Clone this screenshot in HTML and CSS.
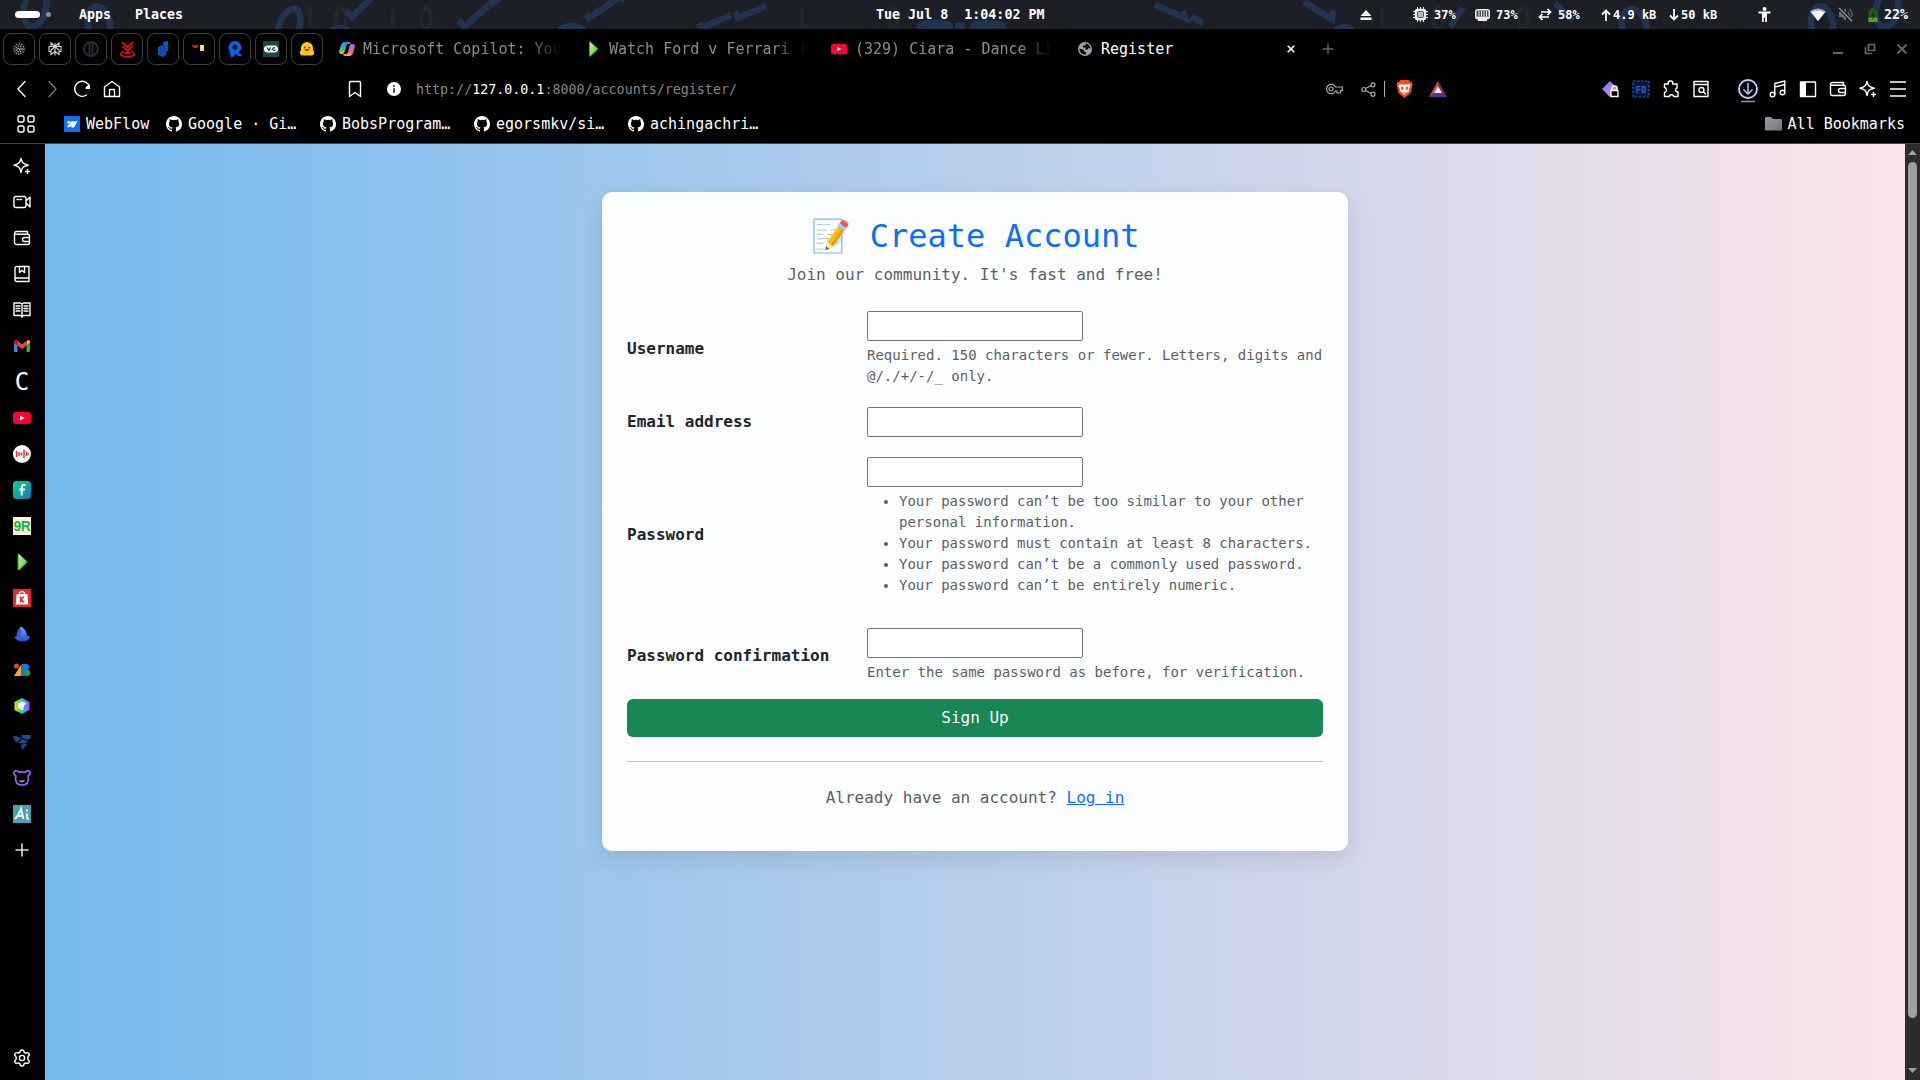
FILE: index.html
```html
<!DOCTYPE html>
<html lang="en">
<head>
<meta charset="utf-8">
<title>Register</title>
<link rel="stylesheet" href="styles.css">
</head>
<body>
<svg width="0" height="0" class="defs">
  <defs>
    <linearGradient id="gPlay" x1="0" y1="0" x2="1" y2="1"><stop offset="0" stop-color="#c8f5b4"/><stop offset="1" stop-color="#4fc433"/></linearGradient>
    <linearGradient id="gCopA" x1="0" y1="0" x2="0" y2="1"><stop offset="0" stop-color="#1b8df0"/><stop offset=".6" stop-color="#3fc29a"/><stop offset="1" stop-color="#f1c21b"/></linearGradient>
    <linearGradient id="gCopB" x1="0" y1="0" x2="0" y2="1"><stop offset="0" stop-color="#9a6cf0"/><stop offset=".6" stop-color="#ef5f8f"/><stop offset="1" stop-color="#f9a35c"/></linearGradient>
    <linearGradient id="gTeal" x1="0" y1="0" x2="1" y2="1"><stop offset="0" stop-color="#06d68f"/><stop offset="1" stop-color="#1377b8"/></linearGradient>
    <linearGradient id="gGem" x1="0" y1="0" x2="1" y2="1"><stop offset="0" stop-color="#4c7df5"/><stop offset=".5" stop-color="#b184f4"/><stop offset="1" stop-color="#f3a0b0"/></linearGradient>
    <linearGradient id="gFin" x1="0" y1="0" x2="0" y2="1"><stop offset="0" stop-color="#78a8ff"/><stop offset="1" stop-color="#1c50d8"/></linearGradient>
    <linearGradient id="gHex" x1="0" y1="0" x2="1" y2="0"><stop offset="0" stop-color="#e8e020"/><stop offset=".3" stop-color="#57e23c"/><stop offset=".6" stop-color="#20b8ec"/><stop offset="1" stop-color="#c538f0"/></linearGradient>
    <linearGradient id="gFolder" x1="0" y1="0" x2="1" y2="1"><stop offset="0" stop-color="#9a9aa2"/><stop offset="1" stop-color="#74747c"/></linearGradient>
    <symbol id="github" viewBox="0 0 16 16"><path fill="#fff" d="M8 0C3.58 0 0 3.58 0 8c0 3.54 2.29 6.53 5.47 7.59.4.07.55-.17.55-.38v-1.49c-2.01.37-2.53-.49-2.69-.94-.09-.23-.48-.94-.82-1.13-.28-.15-.68-.52-.01-.53.63-.01 1.08.58 1.23.82.72 1.21 1.87.87 2.33.66.07-.52.28-.87.51-1.07-1.78-.2-3.64-.89-3.64-3.95 0-.87.31-1.59.82-2.15-.08-.2-.36-1.02.08-2.12 0 0 .67-.21 2.2.82a7.6 7.6 0 0 1 4 0c1.53-1.04 2.2-.82 2.2-.82.44 1.1.16 1.92.08 2.12.51.56.82 1.27.82 2.15 0 3.07-1.87 3.75-3.65 3.95.29.25.54.73.54 1.48v2.2c0 .21.15.46.55.38A8 8 0 0 0 8 0z"/></symbol>
    <symbol id="sparkle" viewBox="0 0 18 18"><path class="ln" d="M8 1.500C9 5.800 10.200 7.200 15.300 8.200 10.200 9.200 9 10.500 8 15.500 7 10.500 5.800 9.200 .9 8.200 5.800 7.200 7 5.800 8 1.500zM14.500 12.500v4M12.500 14.500h4"/></symbol>
    <symbol id="wallet" viewBox="0 0 18 18"><path class="ln" d="M1.500 4.500a2 2 0 0 1 2-2h11v2.500M1.500 4.500c0 .5.500.8 1 .8h12a2 2 0 0 1 2 2v6.200a2 2 0 0 1-2 2h-11a2 2 0 0 1-2-2zM16.500 8.500h-5a2 2 0 0 0 0 4h5"/></symbol>
    <symbol id="play" viewBox="0 0 18 18"><path fill="url(#gPlay)" stroke="#32a51d" d="M5 1.500q0-1 1.200-.3l7.500 7q.9.800 0 1.600l-7.500 7q-1.200.7-1.200-.3z"/></symbol>
    <symbol id="yt" viewBox="0 0 18 18"><rect y="3" width="18" height="12" rx="3" fill="#ff0033"/><path fill="#fff" d="M7 6.500v5l4.500-2.500z"/></symbol>
  </defs>
</svg>

<header class="topbar">
  <svg class="pattern" width="1920" height="29" viewBox="0 0 1920 29">
    <g class="faint"><path d="M307 9h3v19M393 9v19M802 8v18h5M1382 9v18M1485 9v18"/><ellipse cx="341" cy="18" rx="5" ry="10"/><ellipse cx="426" cy="18" rx="5" ry="10"/><ellipse cx="893" cy="18" rx="5" ry="10"/><ellipse cx="1438" cy="18" rx="5" ry="10"/><ellipse cx="1523" cy="18" rx="5" ry="10"/></g>
    <g class="digits"><ellipse cx="35" cy="8" rx="11" ry="19" transform="rotate(12 35 8)"/><ellipse cx="99" cy="25" rx="11" ry="19" transform="rotate(-10 99 25)"/><ellipse cx="289" cy="27" rx="10" ry="19" transform="rotate(20 289 27)"/><ellipse cx="340" cy="38" rx="11" ry="10"/><ellipse cx="572" cy="35" rx="14" ry="9"/><ellipse cx="935" cy="26" rx="15" ry="3"/><ellipse cx="988" cy="26" rx="15" ry="3"/><ellipse cx="1344" cy="36" rx="10" ry="9"/><ellipse cx="1634" cy="25" rx="12" ry="16" transform="rotate(-18 1634 25)"/><ellipse cx="1822" cy="24" rx="11" ry="18" transform="rotate(-8 1822 24)"/><ellipse cx="1887" cy="9" rx="11" ry="18" transform="rotate(12 1887 9)"/>
    <path d="M346 10l6 7L371-2M459 20l5 7L488 6M488 1l4 3 8-6M586 14l3 4L618-2M620 0l6-4M699 23l3 5 29-13M735 12l3 6 28-12M955 26h10M1155 5l30 13-3-7M1191 17l12 6M1304 2l28 17 1-9M1450 27l13-19M1555 3l18 18"/></g>
  </svg>
  <i class="pill"></i><i class="dot"></i>
  <span class="apps">Apps</span><span class="places">Places</span>
  <span class="clock">Tue Jul 8&nbsp; 1:04:02 PM</span>
  <div class="status">
    <svg width="12" height="12" viewBox="0 0 12 12"><path fill="#fff" d="M6 1l5.500 6H.5zM.5 8.500h11V11H.5z"/></svg>
    <svg class="s-cpu" width="15" height="15" viewBox="0 0 15 15"><rect x="1.800" y="1.800" width="11.400" height="11.400" rx="2.500" fill="#eee"/><rect x="4.500" y="4.500" width="6" height="6" rx="1" fill="#bbb" stroke="#555"/><path stroke="#eee" d="M4.500 0v3M7.500 0v3M7.500 12v3M4.500 12v3M10.500 0v2M10.500 13v2M0 4.500h3M0 7.500h3M0 10.500h3M12 4.500h3M12 7.500h3M12 10.500h3"/></svg>
    <b>37%</b>
    <svg class="s-mem" width="15" height="12" viewBox="0 0 15 12"><rect x=".8" y=".8" width="13.400" height="9" rx="2" fill="#444850" stroke="#eee" stroke-width="1.500"/><path stroke="#eee" d="M4 2v5M6.500 2v5M9 2v5M11.500 2v5"/><path stroke="#eee" stroke-width="2" d="M2 8.500h11M3 11h9"/></svg>
    <b>73%</b>
    <svg class="s-swap" width="14" height="13" viewBox="0 0 14 13"><path fill="none" stroke="#fff" stroke-width="1.700" d="M3 4h9M9.500 1l3 3-3 3M11 9H2M4.500 6l-3 3 3 3"/></svg>
    <b>58%</b>
    <svg class="s-up" width="10" height="12" viewBox="0 0 10 12"><path fill="none" stroke="#fff" stroke-width="1.800" d="M5 12V1.500M1 5.500l4-4 4 4"/></svg>
    <b class="net-up">4.9 kB</b>
    <svg class="s-down" width="10" height="12" viewBox="0 0 10 12"><path fill="none" stroke="#fff" stroke-width="1.800" d="M5 0v10.500M1 6.500l4 4 4-4"/></svg>
    <b class="net-down">50 kB</b>
    <svg class="s-person" width="13" height="15" viewBox="0 0 13 15"><circle cx="6.500" cy="2" r="2" fill="#fff"/><path fill="#fff" d="M.5 4.500h12v2H9V15H7.200v-4.500H5.800V15H4V6.500H.5z"/></svg>
    <svg class="s-wifi" width="16" height="13" viewBox="0 0 16 13"><path fill="#aeb1b6" d="M0 3.500q8-6 16 0L8 13z"/><path fill="#fff" d="M1.500 4.500q6.500-3.500 13 0L8 13z"/></svg>
    <svg class="s-mute" width="16" height="15" viewBox="0 0 16 15"><path fill="#6b6e74" d="M1 5h3l4-4v13l-4-4H1z"/><path fill="none" stroke="#5c5f66" stroke-width="1.500" d="M10 5q2 2.500 0 5M11.500 2q4.500 5 1 9"/><path stroke="#1c1f26" stroke-width="3.500" d="M1 1l13 13"/><path stroke="#8a8d92" stroke-width="1.500" d="M1 1l13 13"/></svg>
    <svg class="s-bat" width="10" height="14" viewBox="0 0 10 14"><path fill="#27551e" d="M3 0h4v2h2.500v12H.5V2H3z"/><path fill="#55a80b" d="M.5 9.500h9V14h-9z"/><path fill="#163311" d="M6 3L2.500 8H5l-1 4 3.700-5H5.500z"/></svg>
    <b class="big">22%</b>
  </div>
</header>

<div class="tabs">
  <div class="pins">
    <div class="pin"><svg width="16" height="16" viewBox="0 0 16 16"><circle cx="8" cy="8" r="7" fill="#151515"/><g fill="none" stroke="#9a9a9a" stroke-width="1.200" stroke-dasharray="1.200 1.300"><circle cx="8" cy="8" r="5"/><circle cx="8" cy="8" r="3" stroke="#bbb"/><circle cx="8" cy="8" r="1" stroke="#ddd"/></g></svg></div>
    <div class="pin"><svg width="16" height="16" viewBox="0 0 16 16"><path fill="none" stroke="#d8d8d8" stroke-width="1.100" d="M8 2v12.500M4 2L8 5.500 12 2v3.500h2v5h-2v3L8 10.500l-4 3v-3H2v-5h2zM4 10.500V9l4-3.500L12 9v1.500M4 5.500h8"/></svg></div>
    <div class="pin"><svg width="16" height="16" viewBox="0 0 16 16"><circle cx="8" cy="8" r="7" fill="none" stroke="#2b3037" stroke-width="1.800"/><path stroke="#2b3037" stroke-width="1.800" d="M6.500 2v12M9.500 2v12"/></svg></div>
    <div class="pin"><svg width="17" height="17" viewBox="0 0 17 17"><path fill="none" stroke="#e10b1b" stroke-width="1.700" d="M3 1l5.500 5L14 1M3.500 5l5 4.500 5-4.500M8.500 9.500v2.500M5 10.500q-5 2-2.500 4 6 2.500 12 0 2.500-2-2.500-4M5.500 12.200h6"/></svg></div>
    <div class="pin"><svg width="16" height="16" viewBox="0 0 16 16"><path fill="#1059cd" d="M8 1l5-1v10l-2 1v3l-3 2-5-2V6l5-2z"/><path stroke="#07377f" stroke-width=".5" d="M3 8l10-4M3 11l10-4M3 14l10-5M6 4v11M9 1v14"/></svg></div>
    <div class="pin"><svg width="16" height="16" viewBox="0 0 16 16"><path fill="#b32026" d="M1 4h6.500Q7 7.500 4.200 7.200T1 4z"/><path fill="#f1de70" d="M9 4h4v6H9z"/></svg></div>
    <div class="pin"><svg width="16" height="16" viewBox="0 0 16 16"><path fill="#0b60ee" d="M8 0a6.300 6.300 0 0 1 3.500 11.500q1 1.500 3 2v1.500q-4 .8-6-2.500L6 16H3.500V12Q1 9.500 1.500 6A6.500 6.500 0 0 1 8 0z"/><circle cx="8" cy="6.300" r="2.500" fill="#000"/></svg></div>
    <div class="pin"><svg width="16" height="16" viewBox="0 0 16 16"><path fill="#1e4648" d="M0 0h16v16H0z"/><rect x="1" y="4.500" width="14" height="7" rx="3.500" fill="#fff"/><path fill="none" stroke="#1e4648" stroke-width="1.300" d="M4 6.500l2 3 1.500-3M9 9q1-2.500 3-2.500M10 9.300h2.500"/></svg></div>
    <div class="pin"><svg width="16" height="16" viewBox="0 0 16 16"><path fill="#ffc61a" d="M8 1a6 6 0 0 1 6 6v2q2 2 1 4t-4 1.500H5Q2 15 1 13t1-4V7a6 6 0 0 1 6-6z"/><circle cx="5.800" cy="6.500" r=".9" fill="#423822"/><circle cx="10.200" cy="6.500" r=".9" fill="#423822"/><path fill="#e44a36" stroke="#423822" stroke-width=".7" d="M5.800 8.500h4.400q-2.200 3-4.400 0z"/></svg></div>
  </div>
  <div class="tab"><svg width="16" height="16" viewBox="0 0 16 16"><path fill="url(#gCopA)" d="M5 1h5q1.500 0 2 2H9Q7.500 3 7 5l-1.500 6q-.5 2-2 2H2Q-.5 13 .3 9.500L2 4q1-3 3-3z"/><path fill="url(#gCopB)" d="M11 15H6q-1.500 0-2-2h3q1.500 0 2-2l1.500-6q.5-2 2-2H14q2.500 0 1.700 3.500L14 12q-1 3-3 3z"/></svg><span class="fade">Microsoft Copilot: You</span></div>
  <div class="tab"><svg width="16" height="16"><use href="#play"/></svg><span class="fade">Watch Ford v Ferrari (</span></div>
  <div class="tab"><svg width="16" height="16"><use href="#yt"/></svg><span class="fade">(329) Ciara - Dance Li</span></div>
  <div class="tab active"><svg width="16" height="16" viewBox="0 0 16 16"><circle cx="8" cy="8" r="7" fill="#9aa0a6"/><path fill="#000" d="M8.500 2.500a5.500 5.500 0 0 1 5 5l-2-.5-1 1.500H8.500v-2H6V4.500h2.500zM2.500 7.500l4.500 1.500v1.500l2 1v2A5.500 5.500 0 0 1 2.500 7.500z"/></svg><span>Register</span>
    <svg class="x" width="8" height="8" viewBox="0 0 8 8"><path stroke="#fff" stroke-width="1.600" d="M.7.7l6.600 6.600M7.300.7L.7 7.300"/></svg></div>
  <svg class="plus" width="12" height="12" viewBox="0 0 12 12"><path stroke="#666" stroke-width="1.300" d="M6 .5v11M.5 6h11"/></svg>
  <div class="win">
    <svg width="12" height="12" viewBox="0 0 12 12"><path stroke="#666" stroke-width="2" d="M1 10h10"/></svg>
    <svg width="12" height="12" viewBox="0 0 12 12"><path fill="none" stroke="#666" stroke-width="1.700" d="M4.500 1.500h6v6h-6zM1.500 4v6.500H8"/></svg>
    <svg width="12" height="12" viewBox="0 0 12 12"><path stroke="#666" stroke-width="1.900" d="M1.500 1.500l9 9M10.500 1.500l-9 9"/></svg>
  </div>
</div>

<div class="toolbar">
  <div class="nav">
    <svg width="18" height="18" viewBox="0 0 18 18"><path class="ln" d="M12 1.500L5 9l7 7.500"/></svg>
    <svg class="dim" width="18" height="18" viewBox="0 0 18 18"><path class="ln" d="M6 1.500L13 9l-7 7.500"/></svg>
    <svg width="18" height="18" viewBox="0 0 18 18"><path class="ln" d="M13.500 15A7.500 7.500 0 1 1 16.500 7"/><path fill="#fff" d="M17 4.500V9h-4.500l.5-2.500z"/></svg>
    <svg width="18" height="18" viewBox="0 0 18 18"><path class="ln" d="M1.500 7L9 1.500 16.500 7v9.500h-15zM6.500 16V9.500h5V16"/></svg>
  </div>
  <svg class="bm" width="14" height="18" viewBox="0 0 14 18"><path class="ln" d="M2.500 1.500h9q1 0 1 1v14L7 12.500l-5.500 4v-14q0-1 1-1z"/></svg>
  <svg class="info" width="14" height="14" viewBox="0 0 14 14"><circle cx="7" cy="7" r="7" fill="#fff"/><path stroke="#222" stroke-width="1.600" d="M7 6.200v4.500M7 3.200v1.700"/></svg>
  <span class="url">http://<em>127.0.0.1</em>:8000/accounts/register/</span>
  <div class="urlend">
    <svg width="17" height="12" viewBox="0 0 17 12"><path fill="none" stroke="#aaa" stroke-width="1.200" d="M9.500 4A4.700 4.700 0 1 0 9.500 8H11v2h3.500V7.700h1.700V4zM5 4a2 2 0 1 0 .1 0z"/></svg>
    <svg class="share" width="15" height="15" viewBox="0 0 15 15"><g fill="none" stroke="#aaa" stroke-width="1.200"><circle cx="2.800" cy="7.500" r="2"/><circle cx="12" cy="2.800" r="2"/><circle cx="12" cy="12.200" r="2"/><path d="M4.500 6.500l5.700-3M4.500 8.500l5.700 3"/></g></svg>
    <i class="sep"></i>
    <svg width="17" height="18" viewBox="0 0 17 18"><path fill="#fb4a13" d="M4.500 0h8l1.500 1.800 1.800.2.700 2.500L14.500 13 8.500 18l-6-5L.5 4.500 1.200 2 3 1.800z"/><path fill="#fff" d="M3 4l3 .5h5l3-.5.5 2-2 3.500 1 1.500-2.500 1.500-2.500 2-2.500-2L3.500 11.500l1-1.500-2-3.500z"/><path fill="#fb4a13" d="M5 6.500l2.500 1-.5 3-2-1.500zM12 6.500l-2.500 1 .5 3 2-1.500zM6.500 12h4l-2 1z"/></svg>
    <svg class="bat" width="18" height="16" viewBox="0 0 18 16"><path fill="#ff4724" d="M9 0v5L5 12 0 16z"/><path fill="#9e1f63" d="M9 0l9 16-5-4-4-7z"/><path fill="#662d91" d="M0 16l5-4h8l5 4z"/><path fill="#fff" d="M9 5l4 7H5z"/></svg>
  </div>
  <div class="ext">
    <svg width="18" height="18" viewBox="0 0 18 18"><path fill="url(#gGem)" d="M8 1l8 8-8 8-8-8z"/><path fill="#000" stroke="#fff" stroke-width="1.300" d="M9 10.500h7v6H9z"/><path fill="none" stroke="#fff" stroke-width="1.500" d="M10 10V8.500a2.500 2.500 0 0 1 5 0V10"/></svg>
    <svg width="18" height="18" viewBox="0 0 18 18"><rect x="1" y="1" width="16" height="16" fill="#061634" stroke="#2259cf" stroke-width="1.200" stroke-dasharray="2.500 1.500"/><text x="9" y="12.500" text-anchor="middle" class="fd">FD</text></svg>
    <svg width="18" height="18" viewBox="0 0 18 18"><path class="ln" d="M2.500 4H6.500Q5.500 1 8.500 1t2 3h4.500v4q-1.500.3-1.500 2t2.500 2v4.500h-4.500q.3-1.800-2-1.800t-2 1.800H2.500V12.500Q4.500 12 4.500 10t-2-2.500z"/></svg>
    <svg width="18" height="18" viewBox="0 0 18 18"><path class="ln" d="M2 1.500h14v15H2zM2 4.500h14M11.500 12l2 2"/><circle cx="9.500" cy="10" r="2.500" class="ln"/></svg>
  </div>
  <div class="tools">
    <svg width="20" height="24" viewBox="0 0 20 24"><circle cx="10" cy="10" r="9" fill="none" stroke="#bdd0f8" stroke-width="1.800"/><path fill="none" stroke="#b5b3f0" stroke-width="1.600" d="M10 4v11M5.500 10.500L10 15l4.500-4.500"/><path stroke="#999" stroke-width="1.500" d="M3 22.500h14"/></svg>
    <svg width="18" height="18" viewBox="0 0 18 18"><g class="ln"><circle cx="3.500" cy="14.500" r="2.300"/><circle cx="13.500" cy="12.500" r="2.300"/><path d="M5.800 14.500V3.500L15.800 1v11.500M5.800 7l10-2.500"/></g></svg>
    <svg width="18" height="18" viewBox="0 0 18 18"><path class="ln" d="M1.500 2h15v14.500h-15z"/><path fill="#fff" d="M1.500 2H7v14.500H1.500z"/></svg>
    <svg width="18" height="18"><use href="#wallet"/></svg>
    <svg width="18" height="18"><use href="#sparkle"/></svg>
    <svg width="18" height="18" viewBox="0 0 18 18"><path stroke="#fff" stroke-width="1.600" d="M1 2h16M1 9h16M1 16h16"/></svg>
  </div>
</div>

<div class="bookmarks">
  <svg class="apps-grid" width="18" height="18" viewBox="0 0 18 18"><g class="ln"><rect x="1" y="1" width="6" height="6" rx="1.500"/><rect x="11" y="1" width="6" height="6" rx="1.500"/><rect x="1" y="11" width="6" height="6" rx="1.500"/><rect x="11" y="11" width="6" height="6" rx="1.500"/></g></svg>
  <a class="first"><svg width="16" height="16" viewBox="0 0 16 16"><rect width="16" height="16" rx="1" fill="#146ef5"/><path fill="#fff" d="M13.500 5l-3.500 6.500H7L8.300 9Q6.500 11.200 3.500 11.500V9q2 0 3-1.500H3.500V5H6v2l1.500-2h2v2l1.300-2z"/></svg>WebFlow</a>
  <a><svg width="16" height="16"><use href="#github"/></svg>Google · Gi…</a>
  <a><svg width="16" height="16"><use href="#github"/></svg>BobsProgram…</a>
  <a><svg width="16" height="16"><use href="#github"/></svg>egorsmkv/si…</a>
  <a><svg width="16" height="16"><use href="#github"/></svg>achingachri…</a>
  <a class="all"><svg width="17" height="16" viewBox="0 0 17 16"><path fill="url(#gFolder)" d="M0 2q0-1 1-1h5l2 2h8q1 0 1 1v9.500q0 1-1 1H1q-1 0-1-1z"/></svg>All Bookmarks</a>
</div>

<div class="main">
  <aside class="side">
    <div><svg width="18" height="18"><use href="#sparkle"/></svg></div>
    <div><svg width="18" height="18" viewBox="0 0 18 18"><path class="ln" d="M3 3.500h8q2 0 2 2v7q0 2-2 2H3q-2 0-2-2v-7q0-2 2-2zM13 8l4-4v10l-4-4M4 6.500h1.500M7 6.500h1.500"/></svg></div>
    <div><svg width="18" height="18"><use href="#wallet"/></svg></div>
    <div><svg width="18" height="18" viewBox="0 0 18 18"><path class="ln" d="M16 13V1.500H4q-2 0-2 2v11q0 2 2 2h12M2 14.500Q2 13 4 13h12v3.500M6.500 1.500v6L9 5.500l2.500 2v-6"/></svg></div>
    <div><svg width="18" height="18" viewBox="0 0 18 18"><path class="ln" d="M1 2h6.500L9 3l1.500-1H17v12.500h-7l-1 1.700-1-1.700H1zM9 3v12M3 5h4M3 7.500h4M3 10h4M11 5h4M11 7.500h4M11 10h4"/></svg></div>
    <div><svg width="18" height="18" viewBox="0 0 18 18"><path fill="#4285f4" d="M1 6l3.500 2.500V15H2q-1 0-1-1z"/><path fill="#34a853" d="M17 6l-3.500 2.500V15H16q1 0 1-1z"/><path fill="#c5221f" d="M1 6V4.500Q1.500 2 4 3.500l.5 5z"/><path fill="#ea4335" d="M4.200 3.700L9 7.300l4.800-3.600v4.800L9 12 4.200 8.500z"/><path fill="#fbbc04" d="M17 6V4.500Q16.500 2 14 3.500l-.5 5z"/></svg></div>
    <div class="cee">C</div>
    <div><svg width="18" height="18"><use href="#yt"/></svg></div>
    <div><svg width="18" height="18" viewBox="0 0 18 18"><circle cx="9" cy="9" r="9" fill="#fff"/><path stroke="#e5252d" stroke-width="1.400" d="M3.500 6v6M6 7v4M8.500 7.500v3M11 4.500v9M13.500 7v4M15.500 8.300v1.500"/></svg></div>
    <div><svg width="18" height="18" viewBox="0 0 18 18"><rect width="18" height="18" rx="3.500" fill="url(#gTeal)"/><path fill="none" stroke="#fff" stroke-width="2" d="M12.500 4Q9 3 8.700 6v8.500M6 8.500h6"/></svg></div>
    <div class="nine">9R</div>
    <div><svg width="18" height="18"><use href="#play"/></svg></div>
    <div><svg width="18" height="18" viewBox="0 0 18 18"><path fill="#e5262d" d="M0 0h18v18H0z"/><path fill="#fff" d="M3.500 5h11l.7 10.500H2.800z"/><path fill="none" stroke="#fff" stroke-width="1.400" d="M6.500 6V4q2.500-3 5 0v2"/><path stroke="#e5262d" stroke-width="1.500" d="M7.500 7.500v6M11 7.500l-3 3 3 3" fill="none"/></svg></div>
    <div><svg width="18" height="18" viewBox="0 0 18 18"><path fill="url(#gFin)" d="M8 1.500q5.500 3 6 9.500L17 11.500q-1 4.500-7 5-6 .5-9-5l2.500.3Q4 5 8 1.500z"/><path fill="#3263d6" d="M8 2.500q1 6-1.500 11.500l-2.500-2.500Q4 5 8 2.500z"/></svg></div>
    <div><svg width="18" height="18" viewBox="0 0 18 18"><circle cx="3.500" cy="5" r="2.500" fill="#ea4335"/><path fill="#fbaa19" d="M8.500 3v12H1z"/><path fill="#1a73e8" d="M9 3h4a3 3 0 0 1 2 5.500L9 15z"/><circle cx="14" cy="12" r="3.300" fill="#219553"/><path fill="#1a73e8" d="M8.500 8h3v7h-3z"/></svg></div>
    <div><svg width="18" height="18" viewBox="0 0 18 18"><path fill="url(#gHex)" d="M9 1l7.500 4v8L9 17l-7.500-4V5z"/><path fill="#fff" d="M9 4.500l4.500 2-2.500 2-1 5-5-2.500V6.500z"/></svg></div>
    <div><svg width="18" height="18" viewBox="0 0 18 18"><path fill="#1b4c93" d="M0 3q4-.5 8 2L4.500 9.500Q1 8 0 3zM8.500 2H18q0 3-2.500 5L9 5zM5.500 10.200l3-4.200 6.500 2-3.500 2.500zM7.500 11.500h3l2-1 1.500 1L9.500 17z"/></svg></div>
    <div><svg width="18" height="18" viewBox="0 0 18 18"><path fill="none" stroke="#9664f0" stroke-width="1.700" d="M2.800 7Q-.5 4 1.500 2.300T6 3.300q3-1 6 0 2.500-2.700 4.500-1T15.200 7q1.300 9-6.200 9T2.800 7z"/><path fill="none" stroke="#d5b7fa" stroke-width="1.300" d="M6.500 11.500q2.500 2 5 0"/></svg></div>
    <div><svg width="18" height="18" viewBox="0 0 18 18"><path fill="#4aa3b4" d="M0 0h18v18H0z"/><path fill="none" stroke="#fff" stroke-width="1.900" d="M2 14Q6 10 8 4l2.500 10M4 11h6M14 8.500v3q0 3 2 2M14 4.500v2"/></svg></div>
    <div><svg width="14" height="14" viewBox="0 0 14 14"><path stroke="#ddd" stroke-width="1.600" d="M7 .5v13M.5 7h13"/></svg></div>
    <div class="gear"><svg width="18" height="18" viewBox="0 0 18 18"><circle cx="9" cy="9" r="2.600" class="ln"/><path class="ln" d="M7 3q0-2 2-2t2 2q1 1.300 2.500.8 1.700-.6 2.500 1t-.8 2.400q-1 1.800 0 3.600 1.600.8.800 2.400t-2.500 1Q12 13.700 11 15q0 2-2 2t-2-2q-1-1.300-2.500-.8-1.700.6-2.500-1t.8-2.400q1-1.800 0-3.600Q1.200 6.400 2 4.800t2.500-1Q6 4.300 7 3z"/></svg></div>
  </aside>

  <main class="page">
    <section class="card">
      <h2>📝 Create Account</h2>
      <p class="sub">Join our community. It's fast and free!</p>
      <form>
        <div class="row"><label for="u">Username</label><div><input id="u" type="text"><p class="help">Required. 150 characters or fewer. Letters, digits and @/./+/-/_ only.</p></div></div>
        <div class="row"><label for="e">Email address</label><div><input id="e" type="text"></div></div>
        <div class="row pw"><label for="p">Password</label><div><input id="p" type="password"><ul class="help"><li>Your password can’t be too similar to your other personal information.</li><li>Your password must contain at least 8 characters.</li><li>Your password can’t be a commonly used password.</li><li>Your password can’t be entirely numeric.</li></ul></div></div>
        <div class="row last"><label for="c">Password confirmation</label><div><input id="c" type="password"><p class="help">Enter the same password as before, for verification.</p></div></div>
        <button type="button">Sign Up</button>
      </form>
      <hr>
      <p class="login">Already have an account? <a href="#">Log in</a></p>
    </section>
  </main>
  <div class="scroll">
    <svg width="9" height="5" viewBox="0 0 9 5"><path fill="#a0a0a0" d="M4.500 0L9 5H0z"/></svg>
    <i class="thumb"></i>
    <svg width="9" height="5" viewBox="0 0 9 5"><path fill="#a0a0a0" d="M0 0h9L4.500 5z"/></svg>
  </div>
</div>
</body>
</html>
```
FILE: styles.css
```css
* { box-sizing: border-box; }
html, body { height: 100%; }
body {
  margin: 0;
  width: 1920px;
  height: 1080px;
  overflow: hidden;
  display: flex;
  flex-direction: column;
  background: #000;
  color: #fff;
  font-family: "DejaVu Sans Mono", "Liberation Mono", monospace;
  font-size: 15px;
}
svg { display: block; flex: none; }
i, em { font-style: normal; }
.defs { position: absolute; }
.ln { fill: none; stroke: #fff; stroke-width: 1.4; stroke-linejoin: round; stroke-linecap: round; }

/* desktop bar */
.topbar {
  height: 29px;
  flex: none;
  display: flex;
  align-items: center;
  position: relative;
  background: #1c1f26;
  font-size: 13.33px;
  font-weight: bold;
  white-space: pre;
}
.topbar > *:not(.pattern) { position: relative; }
.pattern { position: absolute; inset: 0; }
.digits { fill: none; stroke: #21334f; stroke-width: 6.5; }
.faint { fill: none; stroke: #23262d; stroke-width: 4; }
.pill { width: 25px; height: 7px; margin-left: 15px; border-radius: 4px; background: #fff; }
.dot { width: 5px; height: 5px; margin-left: 6px; border-radius: 50%; background: #8b8d92; }
.apps { width: 56px; margin-left: 28px; }
.places { width: 740px; }
.clock { margin-left: 1px; }
.status { margin-left: auto; padding-right: 11px; display: flex; align-items: center; }
.status b { font-size: 12px; width: 22px; margin-left: 6px; }
.status .big { font-size: 13.33px; width: 25px; margin-left: 6px; }
.s-cpu { margin-left: 41px; }
.s-mem { margin-left: 19px; }
.s-swap { margin-left: 20px; }
.s-up { margin-left: 21px; }
.status .net-up { width: 44px; margin-left: 2px; }
.s-down { margin-left: 12px; }
.status .net-down { width: 37px; margin-left: 2px; }
.s-person { margin-left: 40px; }
.s-wifi { margin-left: 39px; }
.s-mute { margin-left: 12px; }
.s-bat { margin-left: 14px; }

/* tab strip */
.tabs { height: 40px; flex: none; display: flex; align-items: center; }
.pins { display: flex; gap: 4px; padding-left: 3px; }
.pin {
  width: 32px;
  height: 32px;
  border: 1px solid #3c3c3c;
  border-radius: 8px;
  display: grid;
  place-items: center;
}
.tab { width: 246px; display: flex; align-items: center; gap: 8px; color: #8c8c8c; }
.pins + .tab { margin-left: 16px; }
.fade {
  width: 200px;
  overflow: hidden;
  white-space: nowrap;
  -webkit-mask-image: linear-gradient(to right, #000 82%, transparent 99%);
  mask-image: linear-gradient(to right, #000 82%, transparent 99%);
}
.active { color: #fff; }
.x { margin-left: 106px; }
.plus { margin-left: -1px; }
.win { display: flex; gap: 20px; margin-left: auto; padding-right: 12.5px; }

/* address bar */
.toolbar { height: 40px; flex: none; display: flex; align-items: center; }
.nav { display: flex; gap: 12px; padding-left: 13px; }
.dim { opacity: .45; }
.bm { margin-left: 227px; }
.info { margin-left: 25px; }
.url { margin-left: 15px; width: 910px; font-size: 13.33px; color: #858585; }
.url em { color: #fff; }
.urlend { display: flex; align-items: center; }
.share { margin-left: 18px; }
.sep { width: 1px; height: 16px; margin: 0 11px 0 8px; background: #aaa; }
.bat { margin-left: 16px; }
.ext { display: flex; gap: 12px; margin-left: 155px; }
.tools { height: 20px; display: flex; gap: 12px; margin-left: 28px; }
.tools svg:not(:first-child) { margin-top: 1px; }
.tools svg:first-child { margin-right: -1px; }
.fd { font: bold 9px "DejaVu Sans Mono", monospace; fill: #2a63d6; }

/* bookmarks bar */
.bookmarks { height: 35px; flex: none; padding-bottom: 4px; display: flex; align-items: center; border-bottom: 1px solid #444; }
.bookmarks a { display: flex; align-items: center; gap: 6px; width: 154px; white-space: nowrap; }
.apps-grid { margin-left: 17px; }
.bookmarks .first { width: 102px; margin-left: 29px; }
.bookmarks .all { width: auto; margin-left: auto; padding-right: 15px; }

/* content area */
.main { flex: 1; display: flex; min-height: 0; }
.side { width: 45px; display: flex; flex-direction: column; padding: 4px 1px 4px 0; }
.side > div { height: 36px; display: grid; place-items: center; }
.side .gear { margin-top: auto; }
.cee { font: 24px/1 "DejaVu Sans Mono", monospace; }
.side > .nine {
  width: 18px;
  height: 18px;
  margin: 9px 13px;
  background: #f8f6dc;
  color: #1fb538;
  font: bold 14px/18px "Liberation Sans Narrow", "Liberation Sans", sans-serif;
  letter-spacing: -.5px;
}
.page {
  flex: 1;
  padding-top: 48px;
  background: linear-gradient(to right, #73b9ee, #fce4ea);
}
.card {
  width: 746px;
  height: 659px;
  margin: 0 auto;
  padding: 25px;
  border-radius: 10px;
  background: #fcfdff;
  box-shadow: 0 8px 24px rgba(0, 0, 0, .1);
  color: #212529;
  font-size: 16px;
  line-height: 24px;
}
.card h2 { margin: 0 0 8px; font-size: 32px; font-weight: 400; line-height: 38px; text-align: center; color: #0d6efd; }
.card p { margin: 0; }
.card .sub, .card .login { text-align: center; color: #5c6064; }
.card .sub { margin-bottom: 24px; }
.row { display: grid; grid-template-columns: 240px 1fr; align-items: center; margin-bottom: 20px; }
.row label { font-weight: bold; }
.row input { display: block; width: 216px; height: 30px; margin: 0 0 4px; border: 1px solid #767676; border-radius: 2px; background: #fff; }
.row:nth-child(2) input { margin: 0; }
.help { margin: 0; font-size: 14px; line-height: 21px; color: #5c6064; }
ul.help { padding: 0 0 16px 32px; }
.row.pw { margin-bottom: 16px; }
.row.last { margin-bottom: 16px; }
button {
  display: block;
  width: 100%;
  height: 38px;
  border: 0;
  border-radius: 6px;
  background: #198754;
  color: #fff;
  font: inherit;
}
.card hr { height: 1px; margin: 24px 0; border: 0; background: #c3c5c7; }
.card a { color: #0d6efd; }

/* scrollbar */
.scroll { width: 15px; background: #2c2c2c; display: flex; flex-direction: column; align-items: center; padding: 6px 0 7px; }
.thumb { width: 9px; height: 856px; margin: 7px 0 auto; border-radius: 5px; background: #9f9f9f; }
```
